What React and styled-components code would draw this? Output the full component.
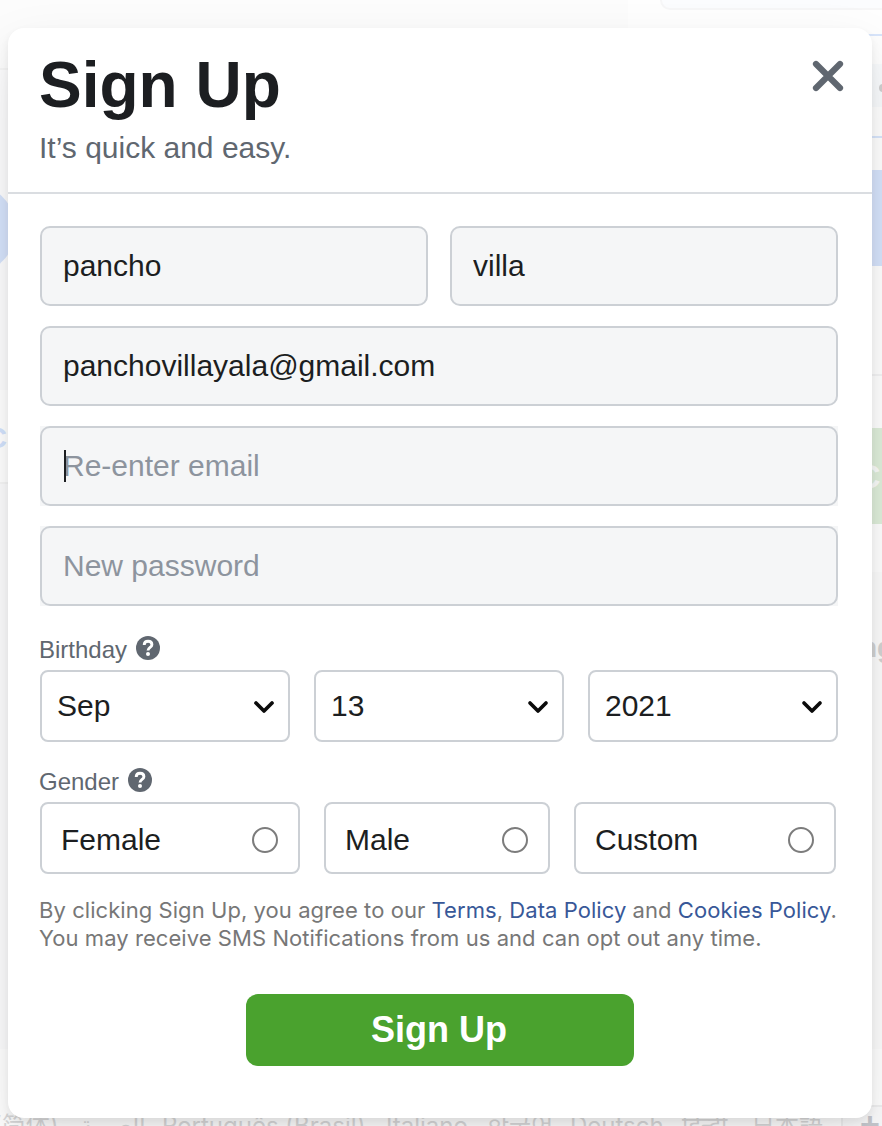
import React from "react";
import styled, { createGlobalStyle } from "styled-components";

const GlobalStyle = createGlobalStyle`
  * { box-sizing: border-box; }
  body { margin: 0; background: #fbfbfb; font-family: "Liberation Sans", Helvetica, Arial, sans-serif; }
`;

const Screen = styled.div`
  position: relative;
  width: 882px;
  height: 1126px;
  overflow: hidden;
`;

/* Faded login page behind the dialog */
const Backdrop = styled.div`
  display: grid;
  grid-template-columns: 628px 254px;
  grid-template-rows: 1049px 77px;
  height: 1126px;
`;
const Recent = styled.div`
  display: flex;
  flex-direction: column;
  background: #fbfbfb;
`;
const Strip = styled.div`
  flex: none;
  overflow: hidden;
  height: ${(p) => p.$h}px;
  background: ${(p) => p.$bg || "transparent"};
  border-top: ${(p) => (p.$line ? `2px solid ${p.$line}` : "0")};
`;
const Avatar = styled.div`
  width: 90px;
  height: 90px;
  margin: 114px 0 0 -74px;
  border-radius: 50%;
  background: #d5e2fa;
`;
const AddLabel = styled.div`
  margin: 31px 0 0 -14px;
  font-size: 29px;
  line-height: 34px;
  color: #d3e2fc;
  font-weight: 700;
`;
const LoginCard = styled.div`
  height: 572px;
  background: #fefefe;
  display: flex;
  flex-direction: column;
`;
const FieldEnd = styled.div`
  flex: none;
  height: 10px;
  margin-left: 32px;
  background: #fbfcfe;
  border: 2px solid #f6f6f7;
  border-top: 0;
  border-right: 0;
  border-radius: 0 0 0 12px;
`;
const PasswordDot = styled.div`
  width: 8px;
  height: 8px;
  margin: 20px 0 0 251px;
  border-radius: 50%;
  background: #cfcfcf;
`;
const CreateLabel = styled.div`
  padding: 28px 0 0 228px;
  font: bold 34px/40px "Liberation Sans", sans-serif;
  color: #f8faf8;
`;
const PageNote = styled.div`
  padding: 62px 0 0 232px;
  font: bold 28px/28px "Liberation Sans", sans-serif;
  color: #d2d2d2;
`;
const Footer = styled.div`
  grid-column: 1 / 3;
  background: #fefefe;
  display: flex;
  align-items: flex-end;
  padding-left: 1px;
  white-space: nowrap;
  overflow: hidden;
`;
const Language = styled.span`
  flex: none;
  width: ${(p) => p.$w}px;
  height: 14px;
  font: 24px/28px Inter, "Noto Sans CJK SC", "Noto Sans", sans-serif;
  color: #d9d9da;
  &:first-child { text-indent: -8px; }
`;
const MoreLanguages = styled.span`
  flex: none;
  width: 58px;
  height: 21px;
  border: 2px solid #efeff0;
  border-bottom: 0;
  background: #fafafb;
  color: #c6c8ce;
  text-align: center;
  font: bold 34px/34px "Liberation Sans", sans-serif;
`;

/* Dialog */
const Dialog = styled.section`
  position: absolute;
  left: 8px;
  top: 28px;
  width: 864px;
  height: 1090px;
  background: #fff;
  border-radius: 16px;
  box-shadow: 0 4px 8px rgba(0, 0, 0, 0.07), 0 24px 56px rgba(0, 0, 0, 0.1);
`;
const Header = styled.header`
  display: flex;
  justify-content: space-between;
  height: 166px;
  padding: 25px 28px 0 31px;
  border-bottom: 2px solid #dadde1;
`;
const Title = styled.h1`
  margin: 0;
  font-size: 64px;
  line-height: 64px;
  color: #1c1e21;
`;
const Subtitle = styled.p`
  margin: 13px 0 0;
  font-size: 30px;
  line-height: 36px;
  color: #606770;
`;
const CloseButton = styled.button`
  width: 32px;
  height: 32px;
  margin-top: 7px;
  padding: 0;
  border: 0;
  background: none;
  svg { display: block; }
`;
const Form = styled.form`
  padding: 32px 34px 0 32px;
  display: flex;
  flex-direction: column;
`;
const Fields = styled.div`
  display: grid;
  grid-template-columns: 1fr 1fr;
  gap: 20px 22px;
`;
const FieldBox = styled.div`
  position: relative;
  grid-column: ${(p) => (p.$wide ? "1 / 3" : "auto")};
  background: ${(p) => (p.$square ? "#f5f6f7" : "transparent")};
`;
const TextField = styled.input`
  display: block;
  width: 100%;
  height: 80px;
  padding: 0 21px;
  border: 2px solid #ccd0d5;
  border-radius: 10px;
  background: #f5f6f7;
  font: 30px "Liberation Sans", sans-serif;
  color: #1c1e21;
  outline: 0;
  &::placeholder { color: #8d949e; opacity: 1; }
`;
const Caret = styled.span`
  position: absolute;
  left: 24px;
  top: 24px;
  width: 2px;
  height: 32px;
  background: #1c1e21;
`;
const Label = styled.div`
  display: flex;
  align-items: center;
  gap: 9px;
  height: 28px;
  margin: ${(p) => p.$top}px 0 8px -1px;
  font-size: 24px;
  line-height: 28px;
  color: #606770;
  span { padding-top: 4px; }
`;
const Selects = styled.div`
  display: grid;
  grid-template-columns: repeat(3, 1fr);
  gap: 24px;
`;
const SelectBox = styled.div`
  display: flex;
  align-items: center;
  justify-content: space-between;
  height: 72px;
  padding: 0 13px 0 15px;
  border: 2px solid #ccd0d5;
  border-radius: 8px;
  font-size: 30px;
  color: #1c1e21;
  svg { margin-top: 2px; }
`;
const Genders = styled.div`
  display: grid;
  grid-template-columns: 260px 226px 262px;
  gap: 24px;
`;
const GenderOption = styled.label`
  display: flex;
  align-items: center;
  justify-content: space-between;
  height: 72px;
  padding: 4px 20px 0 19px;
  border: 2px solid #ccd0d5;
  border-radius: 8px;
  font-size: 30px;
  color: #1c1e21;
`;
const Radio = styled.input`
  appearance: none;
  width: 26px;
  height: 26px;
  margin: 0;
  border: 2px solid #7c7c7c;
  border-radius: 50%;
`;
const Legal = styled.p`
  margin: 22px -20px 0 -1px;
  font: 22px/28px Inter, sans-serif;
  letter-spacing: 0.06px;
  color: #777;
  white-space: nowrap;
`;
const Link = styled.a`
  color: #385898;
`;
const Submit = styled.button`
  align-self: center;
  width: 388px;
  height: 72px;
  margin: 42px 0 0 2px;
  padding: 0 2px 0 0;
  border: 0;
  border-radius: 12px;
  background: #4aa22e;
  color: #fff;
  font: bold 36px/72px "Liberation Sans", sans-serif;
`;

const Help = () => (
  <svg width="24" height="24" viewBox="0 0 24 24">
    <circle cx="12" cy="12" r="12" fill="#606770" />
    <path d="M8.2 9 C8.2 6.5 9.8 5.2 12.1 5.2 C14.4 5.2 15.9 6.7 15.9 8.7 C15.9 11.4 12 11.3 12 14.6" fill="none" stroke="#fff" strokeWidth="2.9" />
    <circle cx="12" cy="18" r="2" fill="#fff" />
  </svg>
);

const Chevron = () => (
  <svg width="22" height="14" viewBox="0 0 22 14">
    <path d="M3 3 L11 11 L19 3" fill="none" stroke="#0b0b0b" strokeWidth="3.7" strokeLinecap="round" strokeLinejoin="round" />
  </svg>
);

const LANGUAGES = [
  ["(简体)", 79],
  ["العربية", 82],
  ["Português (Brasil)", 224],
  ["Italiano", 101],
  ["한국어", 83],
  ["Deutsch", 112],
  ["हिन्दी", 69],
  ["日本語", 90],
];

export default function App() {
  return (
    <Screen>
      <GlobalStyle />
      <Backdrop aria-hidden="true">
        <Recent>
          <Strip $h={68} $bg="#fcfcfc" />
          <Strip $h={322} $line="#f5f5f5" $bg="#fcfcfd">
            <Avatar />
          </Strip>
          <Strip $h={92} $bg="#ffffff">
            <AddLabel>C</AddLabel>
          </Strip>
          <Strip $h={567} $line="#f5f5f5" $bg="#fbfbfc" />
        </Recent>
        <div>
          <LoginCard>
            <FieldEnd />
            <Strip $h={24} />
            <Strip $h={30} $line="#d8e5fb" />
            <Strip $h={43} $bg="#f8fafc">
              <PasswordDot />
            </Strip>
            <Strip $h={29} />
            <Strip $h={34} $line="#d8e5fb" />
            <Strip $h={96} $bg="#d5e2fa" />
            <Strip $h={108} />
            <Strip $h={54} $line="#f3f3f4" />
            <Strip $h={96} $bg="#deeeda">
              <CreateLabel>C</CreateLabel>
            </Strip>
          </LoginCard>
          <PageNote>ng</PageNote>
        </div>
        <Footer>
          {LANGUAGES.map(([name, width]) => (
            <Language key={name} $w={width}>{name}</Language>
          ))}
          <MoreLanguages>+</MoreLanguages>
        </Footer>
      </Backdrop>

      <Dialog role="dialog">
        <Header>
          <div>
            <Title>Sign Up</Title>
            <Subtitle>It’s quick and easy.</Subtitle>
          </div>
          <CloseButton aria-label="Close">
            <svg width="32" height="32" viewBox="0 0 32 32">
              <path d="M4 4 L28 28 M28 4 L4 28" stroke="#606770" strokeWidth="6.2" strokeLinecap="round" />
            </svg>
          </CloseButton>
        </Header>
        <Form>
          <Fields>
            <FieldBox><TextField defaultValue="pancho" /></FieldBox>
            <FieldBox><TextField defaultValue="villa" /></FieldBox>
            <FieldBox $wide><TextField defaultValue="panchovillayala@gmail.com" /></FieldBox>
            <FieldBox $wide $square>
              <TextField placeholder="Re-enter email" />
              <Caret />
            </FieldBox>
            <FieldBox $wide $square><TextField placeholder="New password" /></FieldBox>
          </Fields>
          <Label $top={28}><span>Birthday</span><Help /></Label>
          <Selects>
            {["Sep", "13", "2021"].map((value) => (
              <SelectBox key={value}>{value}<Chevron /></SelectBox>
            ))}
          </Selects>
          <Label $top={24}><span>Gender</span><Help /></Label>
          <Genders>
            {["Female", "Male", "Custom"].map((name) => (
              <GenderOption key={name}>{name}<Radio type="radio" name="gender" /></GenderOption>
            ))}
          </Genders>
          <Legal>
            By clicking Sign Up, you agree to our <Link>Terms</Link>, <Link>Data Policy</Link> and <Link>Cookies Policy</Link>.
            <br />
            You may receive SMS Notifications from us and can opt out any time.
          </Legal>
          <Submit type="button">Sign Up</Submit>
        </Form>
      </Dialog>
    </Screen>
  );
}
